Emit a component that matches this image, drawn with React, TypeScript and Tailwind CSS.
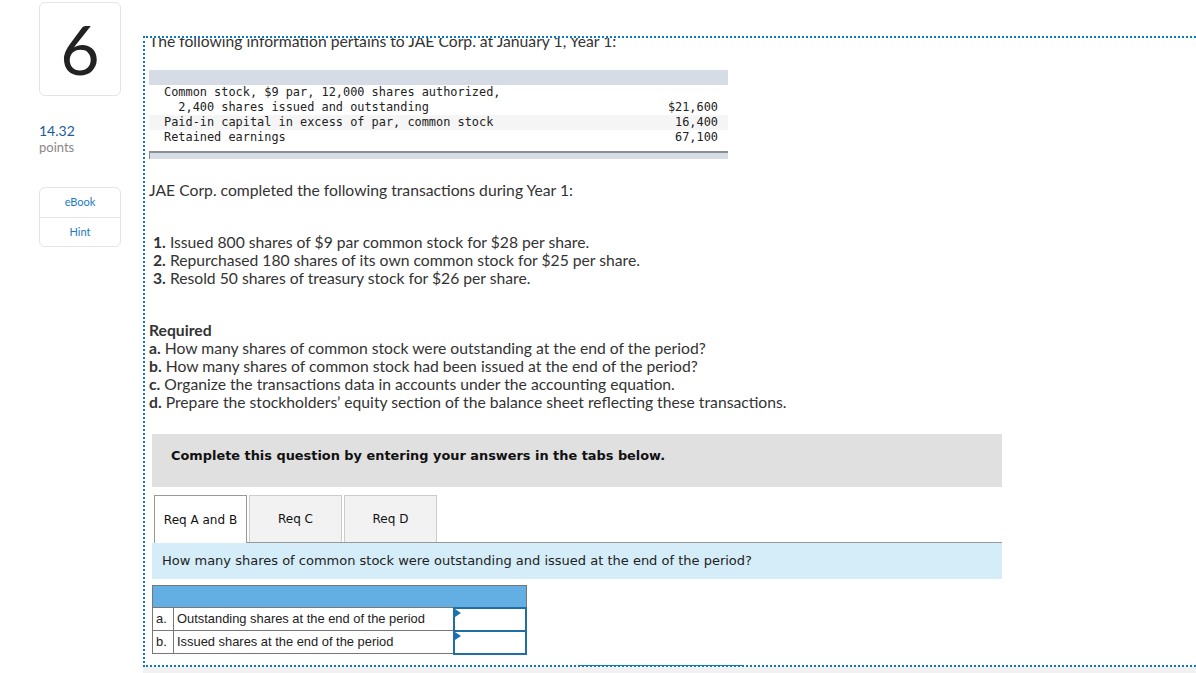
const rows = [
  { label: "Common stock, $9 par, 12,000 shares authorized,", value: "", shade: false },
  { label: "  2,400 shares issued and outstanding", value: "$21,600", shade: false },
  { label: "Paid-in capital in excess of par, common stock", value: "16,400", shade: true },
  { label: "Retained earnings", value: "67,100", shade: false },
];

const transactions = [
  "Issued 800 shares of $9 par common stock for $28 per share.",
  "Repurchased 180 shares of its own common stock for $25 per share.",
  "Resold 50 shares of treasury stock for $26 per share.",
];

const required = [
  ["a.", "How many shares of common stock were outstanding at the end of the period?"],
  ["b.", "How many shares of common stock had been issued at the end of the period?"],
  ["c.", "Organize the transactions data in accounts under the accounting equation."],
  ["d.", "Prepare the stockholders’ equity section of the balance sheet reflecting these transactions."],
];

function AnswerCell() {
  return (
    <td className="relative w-[72px] border-2 border-[#1f6fa5] p-0">
      <span className="absolute left-0 top-0 h-0 w-0 border-y-[4px] border-l-[6px] border-y-transparent border-l-[#1a72b5]" />
      <div className="h-[19px]" />
    </td>
  );
}

export default function App() {
  return (
    <div className="flex h-[673px] w-full overflow-hidden bg-white font-['Lato',sans-serif] text-[#333]">
      <aside className="w-[143px] shrink-0 pl-[39px] pt-[2px]">
        <div className="flex h-[94px] w-[82px] items-center justify-center rounded-md border border-[#e4e4e4] text-[68px] leading-none text-[#222]">
          6
        </div>
        <div className="mt-[27px] text-[14px] leading-[16px] text-[#1c5b99]">14.32</div>
        <div className="text-[13px] leading-[16px] text-[#888]">points</div>
        <div className="mt-[32px] w-[82px] rounded-md border border-[#e4e4e4] text-[11px] text-[#1a7bbf]">
          <div className="flex h-[29px] items-center justify-center">eBook</div>
          <div className="flex h-[29px] items-center justify-center border-t border-[#e4e4e4]">Hint</div>
        </div>
      </aside>

      <main className="relative flex flex-1 flex-col">
        <div className="mt-[36px] h-[631px] overflow-hidden border-2 border-r-0 border-dotted border-[#0b79bf] pl-[4px]">
          <p className="-mt-[6px] text-[15.7px] leading-[18px]">
            The following information pertains to JAE Corp. at January 1, Year 1:
          </p>

          <div className="mt-[20px] w-[579px] font-['DejaVu_Sans_Mono',monospace] text-[11.9px] leading-[15px] text-[#222]">
            <div className="h-[15px] bg-[#d6dce5]" />
            {rows.map((r) => (
              <div
                key={r.label}
                className={`flex justify-between pl-[15px] pr-[10px] ${r.shade ? "bg-[#f5f5f5]" : ""}`}
              >
                <span className="whitespace-pre">{r.label}</span>
                <span>{r.value}</span>
              </div>
            ))}
            <div className="mt-[6px] h-[8px] border-l border-t-2 border-[#8a8f96] bg-[#d6dce5]" />
          </div>

          <p className="mt-[22px] text-[15.7px] leading-[18px]">
            JAE Corp. completed the following transactions during Year 1:
          </p>

          <ol className="mt-[34px] pl-[4px] text-[15.7px] leading-[18px]">
            {transactions.map((t, i) => (
              <li key={t}>
                <b>{i + 1}.</b> {t}
              </li>
            ))}
          </ol>

          <div className="mt-[34px] text-[15.7px] leading-[18px]">
            <p className="font-bold">Required</p>
            {required.map(([k, t]) => (
              <p key={k}>
                <b>{k}</b> {t}
              </p>
            ))}
          </div>

          <div className="ml-[3px] mt-[23px] w-[850px]">
            <div className="h-[53px] bg-[#e0e0e0] pl-[19px] pt-[14px] font-['DejaVu_Sans',sans-serif] text-[12.9px] font-bold leading-[16px] text-[#111]">
              Complete this question by entering your answers in the tabs below.
            </div>

            <div className="mt-[8px] flex pl-[2px] font-['DejaVu_Sans',sans-serif] text-[12px] text-[#111]">
              <div className="flex h-[48px] w-[93px] items-center justify-center border border-b-0 border-[#999] bg-white">
                Req A and B
              </div>
              <div className="flex flex-1 gap-[2px] border-b border-[#999] pl-[2px]">
                <div className="flex h-[47px] w-[93px] items-center justify-center border border-b-0 border-[#ccc] bg-[#f2f2f2]">
                  Req C
                </div>
                <div className="flex h-[47px] w-[93px] items-center justify-center border border-b-0 border-[#ccc] bg-[#f2f2f2]">
                  Req D
                </div>
              </div>
            </div>

            <div className="flex h-[36px] items-center bg-[#d5edf9] pl-[10px] font-['DejaVu_Sans',sans-serif] text-[13px] text-[#222]">
              How many shares of common stock were outstanding and issued at the end of the period?
            </div>

            <table className="mt-[6px] w-[375px] border-collapse border border-[#777] font-['Liberation_Sans',sans-serif] text-[12.9px] text-[#222]">
              <tbody>
                <tr className="h-[22px] bg-[#63aee3]">
                  <td colSpan={3} />
                </tr>
                <tr className="h-[23px]">
                  <td className="w-[21px] border border-[#777] pl-[3px]">a.</td>
                  <td className="border border-[#777] pl-[3px]">Outstanding shares at the end of the period</td>
                  <AnswerCell />
                </tr>
                <tr className="h-[23px]">
                  <td className="w-[21px] border border-[#777] pl-[3px]">b.</td>
                  <td className="border border-[#777] pl-[3px]">Issued shares at the end of the period</td>
                  <AnswerCell />
                </tr>
              </tbody>
            </table>
          </div>
        </div>
        <div className="absolute left-[437px] top-[665px] h-[1px] w-[163px] bg-[#0b79bf]" />
        <div className="h-[6px] bg-[#f1f1f1]" />
      </main>
    </div>
  );
}
